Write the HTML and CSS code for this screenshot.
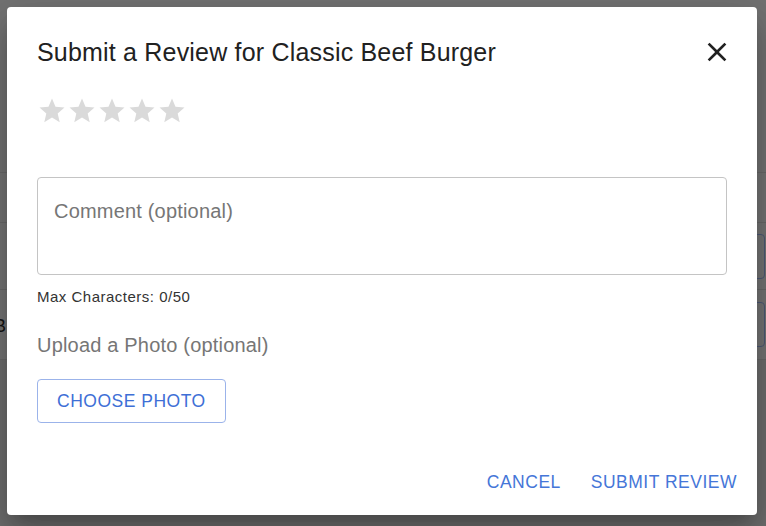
FILE: index.html
```html
<!DOCTYPE html>
<html lang="en">
<head>
<meta charset="utf-8">
<title>Submit a Review</title>
<link rel="stylesheet" href="styles.css">
</head>
<body>
<div class="page">
  <div class="page-band page-band-top"></div>
  <div class="page-band page-band-2"></div>
  <div class="page-row page-row-1"><span class="page-letter"></span><span class="page-box"></span></div>
  <div class="page-row page-row-2"><span class="page-letter">B</span><span class="page-box"></span></div>
  <div class="page-band page-band-bottom"></div>
</div>

<div class="dialog" role="dialog">
  <div class="dialog-title">
    <h2 class="title-text">Submit a Review for Classic Beef Burger</h2>
    <button class="close-btn" aria-label="close">
      <svg width="32" height="32" viewBox="0 0 24 24"><path d="M19 6.41L17.59 5 12 10.59 6.41 5 5 6.41 10.59 12 5 17.59 6.41 19 12 13.41 17.59 19 19 17.59 13.41 12z"/></svg>
    </button>
  </div>

  <div class="stars">
    <svg class="star" viewBox="0 0 24 24"><path d="M12 17.27L18.18 21l-1.64-7.03L22 9.24l-7.19-.61L12 2 9.19 8.63 2 9.24l5.46 4.73L5.82 21z"/></svg>
    <svg class="star" viewBox="0 0 24 24"><path d="M12 17.27L18.18 21l-1.64-7.03L22 9.24l-7.19-.61L12 2 9.19 8.63 2 9.24l5.46 4.73L5.82 21z"/></svg>
    <svg class="star" viewBox="0 0 24 24"><path d="M12 17.27L18.18 21l-1.64-7.03L22 9.24l-7.19-.61L12 2 9.19 8.63 2 9.24l5.46 4.73L5.82 21z"/></svg>
    <svg class="star" viewBox="0 0 24 24"><path d="M12 17.27L18.18 21l-1.64-7.03L22 9.24l-7.19-.61L12 2 9.19 8.63 2 9.24l5.46 4.73L5.82 21z"/></svg>
    <svg class="star" viewBox="0 0 24 24"><path d="M12 17.27L18.18 21l-1.64-7.03L22 9.24l-7.19-.61L12 2 9.19 8.63 2 9.24l5.46 4.73L5.82 21z"/></svg>
  </div>

  <div class="comment-box">
    <span class="placeholder">Comment (optional)</span>
  </div>
  <div class="helper">Max Characters: 0/50</div>

  <div class="upload-label">Upload a Photo (optional)</div>
  <button class="choose-btn">CHOOSE PHOTO</button>

  <div class="actions">
    <button class="text-btn">CANCEL</button>
    <button class="text-btn">SUBMIT REVIEW</button>
  </div>
</div>
</body>
</html>
```
FILE: styles.css
```css
* { box-sizing: border-box; }
html, body { margin: 0; padding: 0; }
body {
  width: 766px;
  height: 526px;
  overflow: hidden;
  background: #757575;
  font-family: "Liberation Sans", Arial, Helvetica, sans-serif;
  position: relative;
}

/* dimmed page behind the dialog */
.page { display: flex; flex-direction: column; height: 526px; }
.page-band, .page-row { border-bottom: 1px solid #696969; }
.page-band-top { height: 173px; background: #737373; }
.page-band-2 { height: 50px; background: #747474; }
.page-row {
  display: flex;
  justify-content: space-between;
  align-items: center;
  background: #757575;
}
.page-row-1 { height: 67px; }
.page-row-2 { height: 70px; }
.page-letter {
  font-size: 18px;
  line-height: 20px;
  color: #141414;
  margin-left: -6px;
  padding-top: 3px;
}
.page-box {
  width: 60px;
  height: 45px;
  margin-right: 1px;
  border: 1px solid #4d5a76;
  border-radius: 4px;
}
.page-band-bottom { flex: 1; border-bottom: 0; background: #6e6e6e; }

/* dialog */
.dialog {
  position: absolute;
  left: 7px;
  top: 7px;
  width: 750px;
  height: 508px;
  background: #fff;
  border-radius: 4px;
  box-shadow: 0 11px 15px -7px rgba(0,0,0,0.2), 0 24px 38px 3px rgba(0,0,0,0.14), 0 9px 46px 8px rgba(0,0,0,0.12);
  padding: 25px 30px 0 30px;
  display: flex;
  flex-direction: column;
}
.dialog-title {
  display: flex;
  justify-content: space-between;
  align-items: center;
  height: 40px;
}
.title-text {
  margin: 0;
  font-size: 25px;
  font-weight: 400;
  line-height: 40px;
  letter-spacing: 0.19px;
  color: #212121;
}
.close-btn {
  border: 0;
  background: none;
  padding: 0;
  margin-right: -6px;
  width: 32px;
  height: 32px;
  display: flex;
  fill: #212121;
}

.stars {
  display: flex;
  height: 30px;
  margin-top: 24px;
}
.star { width: 30px; height: 30px; fill: #dadada; }

.comment-box {
  margin-top: 51px;
  height: 98px;
  border: 1px solid #c4c4c4;
  border-radius: 4px;
  padding: 18px 16px;
}
.placeholder {
  display: block;
  font-size: 20px;
  line-height: 30px;
  letter-spacing: 0.19px;
  color: #767676;
}
.helper {
  margin-top: 12px;
  font-size: 15px;
  line-height: 20px;
  color: #333;
  letter-spacing: 0.5px;
}
.upload-label {
  margin-top: 23px;
  font-size: 20px;
  line-height: 30px;
  letter-spacing: 0.19px;
  color: #767676;
}
.choose-btn {
  align-self: flex-start;
  margin-top: 19px;
  height: 44px;
  padding: 0 19px;
  border: 1px solid #9bb3ea;
  border-radius: 4px;
  background: #fff;
  font-family: inherit;
  font-size: 17.5px;
  letter-spacing: 0.5px;
  color: #3e6fd6;
}

.actions {
  display: flex;
  justify-content: flex-end;
  gap: 30px;
  margin-top: 42px;
  margin-right: -10px;
}
.text-btn {
  border: 0;
  background: none;
  padding: 0;
  font-family: inherit;
  font-size: 17.5px;
  line-height: 35px;
  letter-spacing: 0.5px;
  color: #4576d8;
}
```
